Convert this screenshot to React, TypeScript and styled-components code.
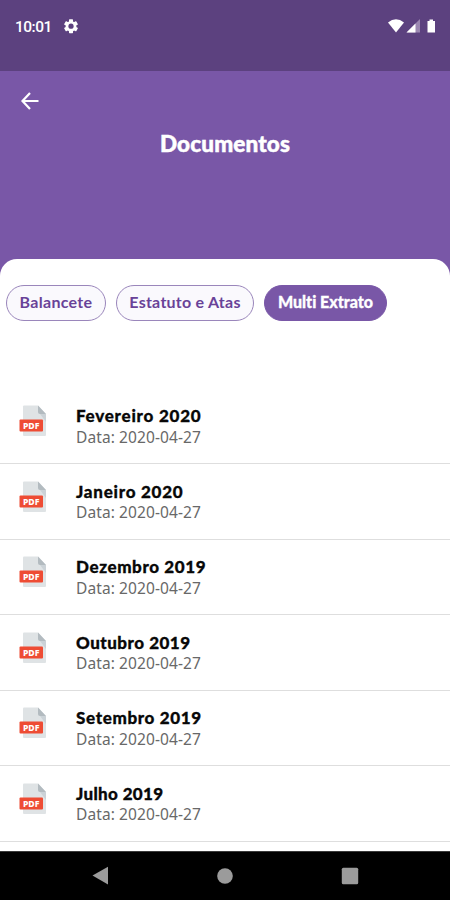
import React from "react";
import styled, { createGlobalStyle } from "styled-components";

const GlobalStyle = createGlobalStyle`
  * { box-sizing: border-box; }
  body { margin: 0; background: #fff; font-family: "Noto Sans", "Open Sans", sans-serif; }
`;

const Screen = styled.div`
  width: 450px;
  height: 900px;
  display: flex;
  flex-direction: column;
  overflow: hidden;
  background: #7957a7;
`;

const StatusBar = styled.div`
  flex: none;
  height: 71px;
  padding: 17px 14px 0 15px;
  display: flex;
  align-items: flex-start;
  background: #5c417f;
  svg { display: block; }
`;

const Clock = styled.span`
  width: 48px;
  font: 500 15.5px/20px Roboto, sans-serif;
  letter-spacing: -0.5px;
  color: #fff;
`;

const StatusIcons = styled.div`
  margin-left: auto;
  padding-top: 2px;
`;

const Header = styled.header`
  flex: none;
  height: 188px;
  padding-top: 20px;
  color: #fff;
`;

const BackButton = styled.button`
  display: block;
  width: 20px;
  height: 20px;
  margin: 0 0 0 20px;
  padding: 0;
  border: 0;
  background: none;
  svg { display: block; }
`;

const PageTitle = styled.h1`
  margin: 19px 0 0;
  text-align: center;
  font: 900 22.5px/28px Lato, sans-serif;
  letter-spacing: 0.15px;
  -webkit-text-stroke: 0.5px currentColor;
`;

const Sheet = styled.main`
  flex: 1;
  min-height: 0;
  border-radius: 17px 17px 0 0;
  background: #fff;
  overflow: hidden;
`;

const Tabs = styled.div`
  display: flex;
  gap: 10px;
  padding: 26px 0 0 6px;
`;

const Tab = styled.button<{ $width: number; $spacing: number; $active?: boolean }>`
  width: ${(p) => p.$width}px;
  height: 36px;
  padding: 0 0 3px;
  border: 1px solid ${(p) => (p.$active ? "#7957a7" : "#9a86bb")};
  border-radius: 18px;
  background: ${(p) => (p.$active ? "#7957a7" : "#faf9fd")};
  color: ${(p) => (p.$active ? "#fff" : "#694298")};
  font: ${(p) => (p.$active ? 900 : 700)} 16px/22px Lato, sans-serif;
  letter-spacing: ${(p) => p.$spacing}px;
  font-variant-ligatures: none;
  -webkit-text-stroke: ${(p) => (p.$active ? "0.3px" : "0")} currentColor;
  white-space: nowrap;
`;

const List = styled.ul`
  list-style: none;
  margin: 67.5px 0 0;
  padding: 0;
`;

const Row = styled.li`
  height: 75.5px;
  padding: 16.5px 0 0 19px;
  display: flex;
  border-bottom: 1.5px solid #dedede;
`;

const FileIcon = styled.svg`
  flex: none;
  width: 28px;
  height: 32px;
  margin-right: 29px;
`;

const DocName = styled.div<{ $spacing: number }>`
  font: 900 17px/21.5px Lato, sans-serif;
  letter-spacing: ${(p) => p.$spacing}px;
  -webkit-text-stroke: 0.3px currentColor;
  color: #080808;
`;

const DocDate = styled.div`
  font: 400 15.5px/20px "Noto Sans", sans-serif;
  letter-spacing: 0.1px;
  color: #686868;
`;

const NavBar = styled.nav`
  flex: none;
  height: 49px;
  display: flex;
  align-items: center;
  justify-content: space-around;
  padding: 0 37px;
  border-top: 1px solid #3a3a3a;
  background: #000;
  svg { display: block; }
`;

const documents = [
  { name: "Fevereiro 2020", spacing: 0.75 },
  { name: "Janeiro 2020", spacing: 0.75 },
  { name: "Dezembro 2019", spacing: 0.6 },
  { name: "Outubro 2019", spacing: 0.5 },
  { name: "Setembro 2019", spacing: 0.65 },
  { name: "Julho 2019", spacing: 0.35 },
];

const PdfIcon = () => (
  <FileIcon viewBox="0 0 28 32">
    <path d="M4 1.5Q4 .5 5 .5H19L27 9V30Q27 31 26 31H5Q4 31 4 30Z" fill="#dfe3e5" />
    <path d="M21 9H27V17Z" fill="#cbd2d7" />
    <path d="M19 .5 27 9H21Q19 9 19 7Z" fill="#b3bbc0" />
    <rect x=".5" y="14.5" width="23.5" height="12" rx="1" fill="#ee4c34" />
    <text x="12.2" y="23.7" textAnchor="middle" textLength="16.5" lengthAdjust="spacingAndGlyphs" fontFamily="Noto Sans" fontSize="8.5" fontWeight="800" fill="#fff">PDF</text>
  </FileIcon>
);

export default function App() {
  return (
    <>
      <GlobalStyle />
      <Screen>
        <StatusBar>
          <Clock>10:01</Clock>
          <svg width="16" height="19" viewBox="0 0 16 19">
            <g transform="translate(8 9.2)" fill="#fff">
              {[0, 60, 120].map((angle) => (
                <rect key={angle} x="-2" y="-7" width="4" height="14" rx=".6" transform={`rotate(${angle})`} />
              ))}
              <circle r="5.3" />
              <circle r="2.6" fill="#5c417f" />
            </g>
          </svg>
          <StatusIcons>
            <svg width="49" height="15" viewBox="0 0 49 15">
              <path d="M1 3.5Q9-2.8 17 3.5L9 13.5Z" fill="#fff" />
              <path d="M19.5 13.5 33 0V13.5Z" fill="#9b87b1" />
              <path d="M19.5 13.5 28.5 4.5V13.5Z" fill="#fff" />
              <path d="M40.5 2H42.5V.5H46V2H48V13.5H40.5Z" fill="#fff" />
            </svg>
          </StatusIcons>
        </StatusBar>
        <Header>
          <BackButton aria-label="Voltar">
            <svg width="20" height="20" viewBox="0 0 20 20" fill="none" stroke="#fff" strokeWidth="2.2">
              <path d="M18.5 10H3M10 2 2.5 10 10 18" />
            </svg>
          </BackButton>
          <PageTitle>Documentos</PageTitle>
        </Header>
        <Sheet>
          <Tabs>
            <Tab $width={100} $spacing={0.3}>Balancete</Tab>
            <Tab $width={138} $spacing={0.25}>Estatuto e Atas</Tab>
            <Tab $width={123} $spacing={0} $active>Multi Extrato</Tab>
          </Tabs>
          <List>
            {documents.map((doc) => (
              <Row key={doc.name}>
                <PdfIcon />
                <div>
                  <DocName $spacing={doc.spacing}>{doc.name}</DocName>
                  <DocDate>Data: 2020-04-27</DocDate>
                </div>
              </Row>
            ))}
          </List>
        </Sheet>
        <NavBar>
          <svg width="18" height="20" viewBox="0 0 18 20"><path d="M1.5 9.5 17 .8V18.5Z" fill="#9b9b9b" /></svg>
          <svg width="18" height="18" viewBox="0 0 18 18"><circle cx="9" cy="9" r="7.8" fill="#9b9b9b" /></svg>
          <svg width="18" height="18" viewBox="0 0 18 18"><rect x=".8" y=".8" width="16.4" height="16.4" rx="1.5" fill="#9b9b9b" /></svg>
        </NavBar>
      </Screen>
    </>
  );
}
